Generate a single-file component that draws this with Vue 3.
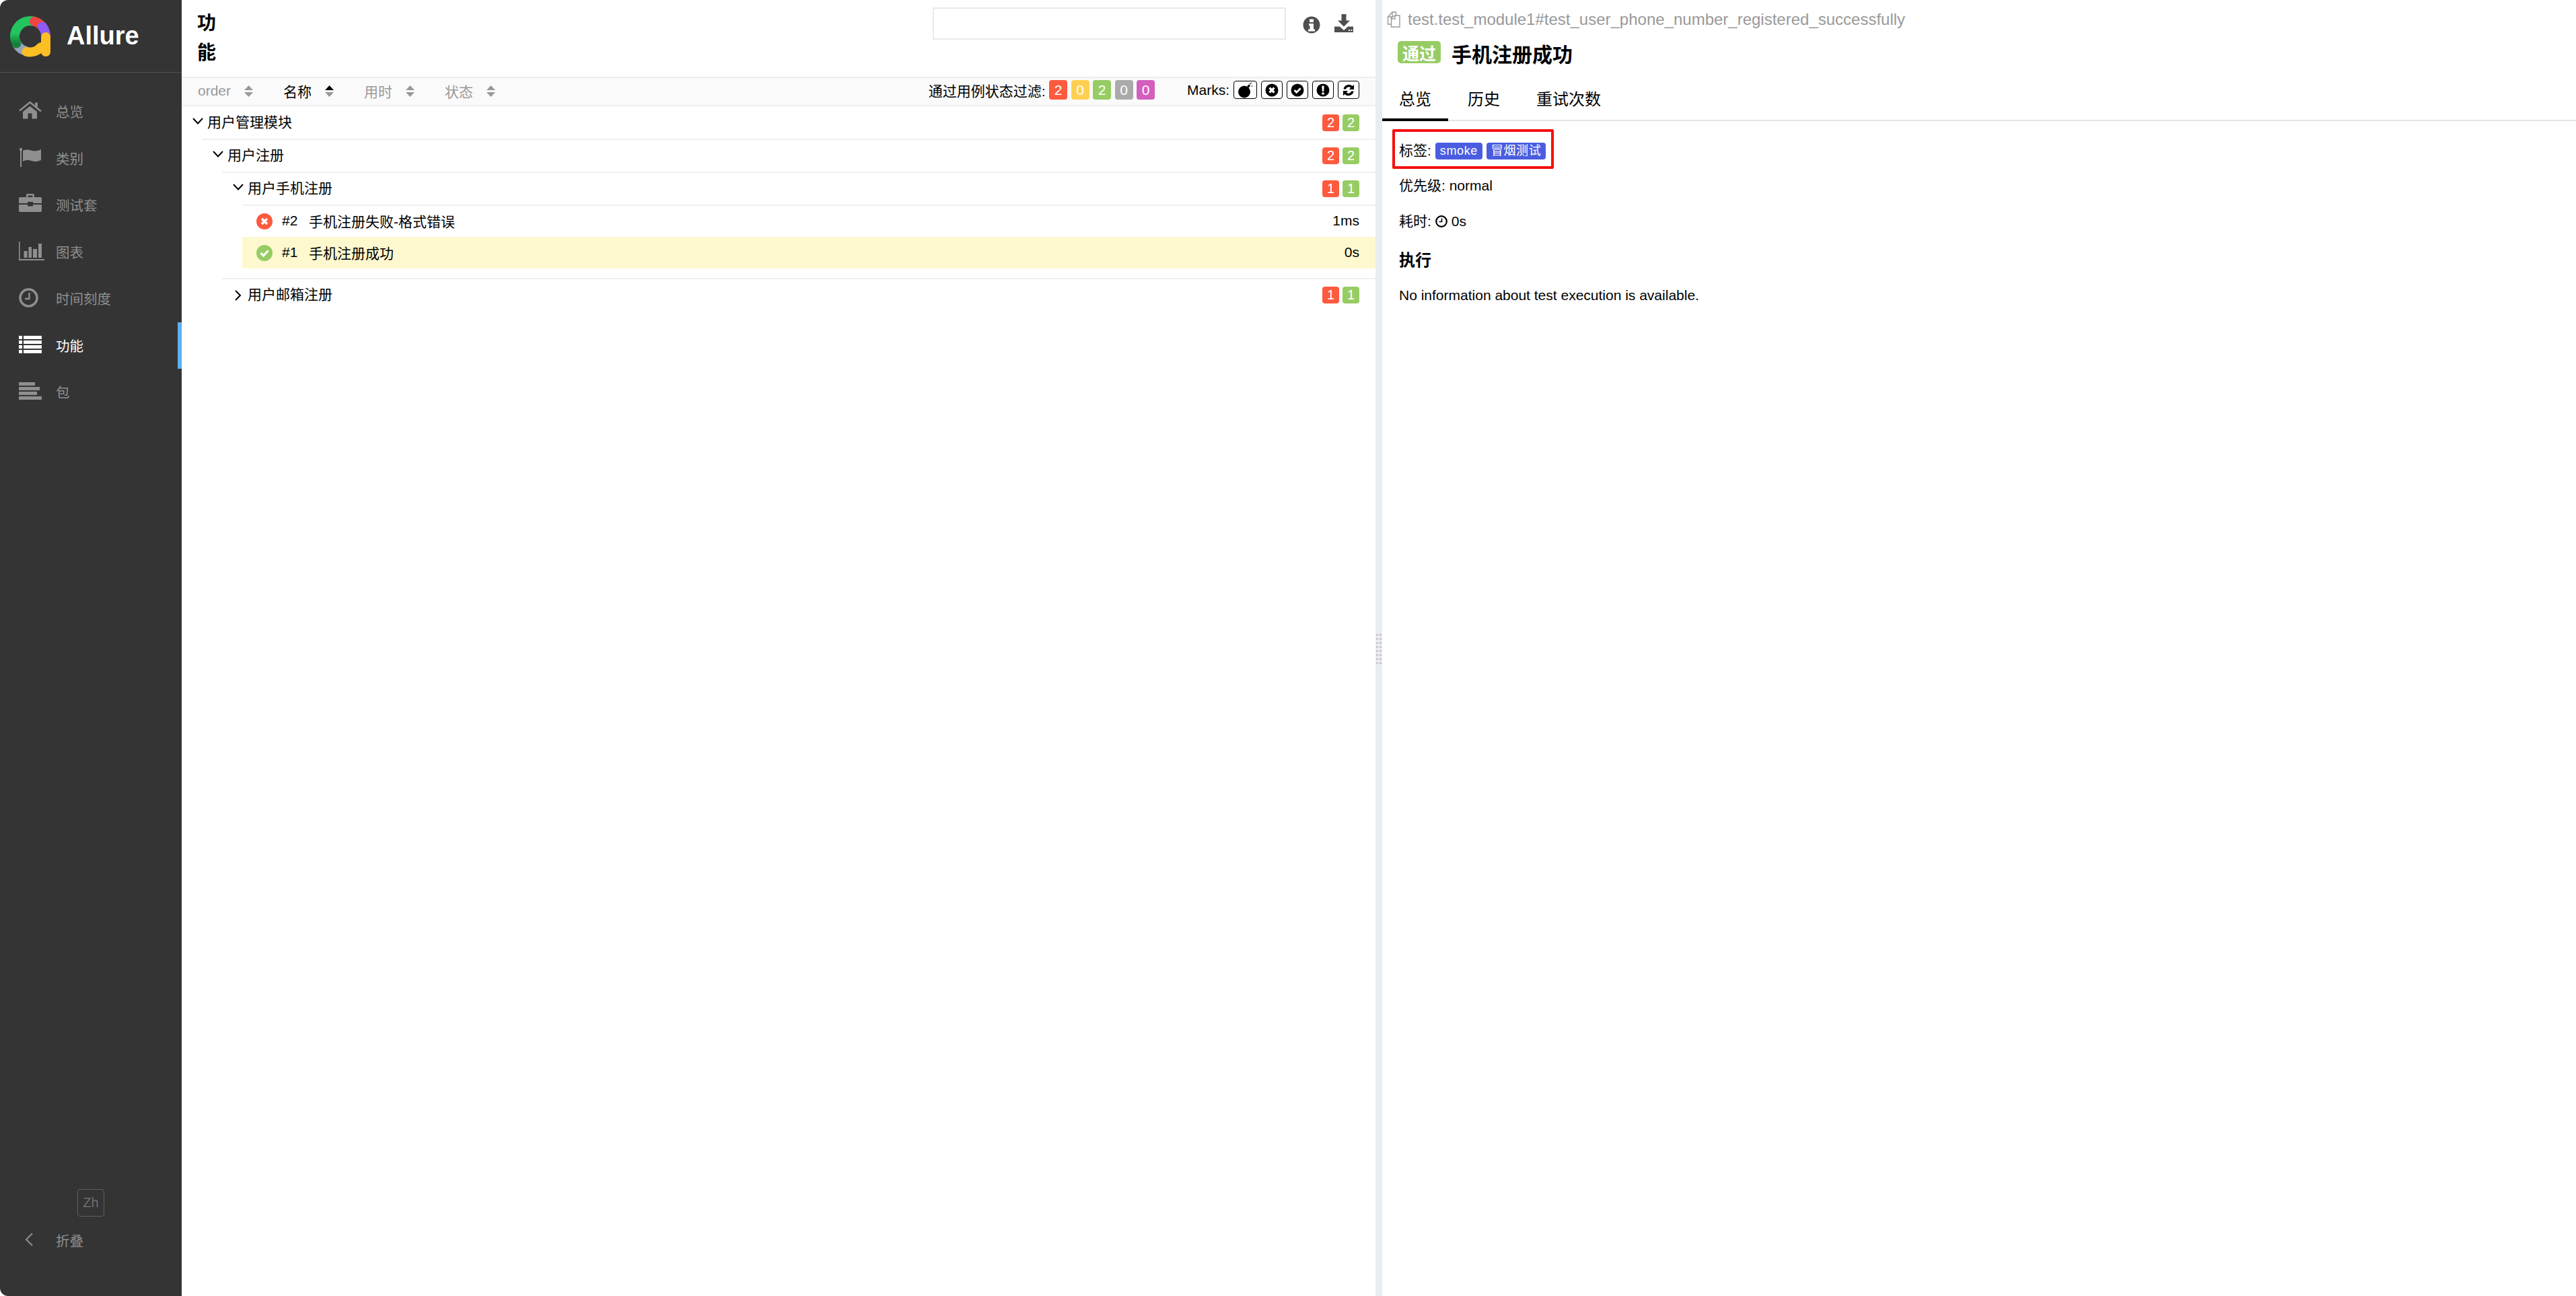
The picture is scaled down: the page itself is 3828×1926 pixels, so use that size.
<script setup>
const menu = [
  { label: '总览', icon: 'home' },
  { label: '类别', icon: 'flag' },
  { label: '测试套', icon: 'case' },
  { label: '图表', icon: 'chart' },
  { label: '时间刻度', icon: 'clock' },
  { label: '功能', icon: 'list', active: true },
  { label: '包', icon: 'pack' },
]
const sorts = [
  { label: 'order' },
  { label: '名称', active: true },
  { label: '用时' },
  { label: '状态' },
]
const filters = [
  { n: 2, c: 'failed' },
  { n: 0, c: 'broken' },
  { n: 2, c: 'passed' },
  { n: 0, c: 'skipped' },
  { n: 0, c: 'unknown' },
]
const dots = Array.from({ length: 16 }, (_, i) => i)
</script>

<template>
  <div class="app">
    <aside class="side">
      <div class="brand">
        <svg class="logo" viewBox="0 0 60 60" fill="none" stroke-width="14" stroke-linecap="round">
          <defs>
            <linearGradient id="g" x1="0" y1="0" x2="0" y2="1">
              <stop offset="0.55" stop-color="#22c55e" />
              <stop offset="1" stop-color="#15803d" />
            </linearGradient>
          </defs>
          <path d="M10 41.5 A23 23 0 0 0 25 52.5" stroke="#94a3b8" />
          <path d="M9.500 40.500 A23 23 0 0 1 35 7.600" stroke="url(#g)" />
          <path d="M36 7.800 A23 23 0 0 1 49 17" stroke="#ef4444" />
          <path d="M48 15.500 A23 23 0 0 1 53 30" stroke="#8b5cf6" />
          <path d="M53 31 V53" stroke="#fbbf24" />
          <path d="M24.500 53 A23 23 0 0 0 46 46" stroke="#fbbf24" />
        </svg>
        <span class="brand-name">Allure</span>
      </div>
      <nav class="menu">
        <a v-for="m in menu" :key="m.label" class="item" :class="{ on: m.active }">
          <span class="ico">
            <svg v-if="m.icon === 'home'" width="34" height="26" viewBox="0 0 34 26" fill="currentColor">
              <path d="M1 13.500 16.500 1 33 14.500" fill="none" stroke="currentColor" stroke-width="2.600" />
              <path d="M24 1.500h4v7l-4-3zM6 15 16.500 6.800 27 15v10.500h-7.500V17.500h-6v8H6z" />
            </svg>
            <svg v-else-if="m.icon === 'flag'" width="34" height="29" viewBox="0 0 34 29" fill="currentColor">
              <circle cx="3" cy="3" r="2.200" />
              <rect x="2" y="3" width="2" height="26" />
              <path d="M6 5c6-3 10-1 14 0 5 1 9 0 13-2v16c-5 2-9 3-14 1-4-1-8-2-13 1z" />
            </svg>
            <svg v-else-if="m.icon === 'case'" class="lift" width="34" height="28" viewBox="0 0 34 28" fill="currentColor">
              <path d="M11 6V3a2 2 0 0 1 2-2h8a2 2 0 0 1 2 2v3h-2.500V3.500h-7V6z" />
              <path d="M2 6h30a2 2 0 0 1 2 2v7H21v-2h-8v2H0V8a2 2 0 0 1 2-2z" />
              <path d="M0 17h13v2.500h8V17h13v9a2 2 0 0 1-2 2H2a2 2 0 0 1-2-2z" />
            </svg>
            <svg v-else-if="m.icon === 'chart'" width="38" height="28" viewBox="0 0 38 28" fill="currentColor">
              <path d="M0 0h1.600v26H38v2H0z" />
              <rect x="7.500" y="14" width="5" height="10" />
              <rect x="14.500" y="8" width="4.500" height="16" />
              <rect x="21" y="11" width="6" height="13" />
              <rect x="29" y="3" width="5" height="21" />
            </svg>
            <svg v-else-if="m.icon === 'clock'" width="29" height="29" viewBox="0 0 29 29" fill="none" stroke="currentColor">
              <circle cx="14.500" cy="14.500" r="12.500" stroke-width="3.600" />
              <path d="M15.500 7v9H9" stroke-width="2.400" />
            </svg>
            <svg v-else-if="m.icon === 'list'" width="34" height="26" viewBox="0 0 34 26" fill="currentColor">
              <path d="M0 0h5v5H0zM7 0h27v5H7zM0 7h5v5H0zM7 7h27v5H7zM0 14h5v5H0zM7 14h27v5H7zM0 21h5v5H0zM7 21h27v5H7z" />
            </svg>
            <svg v-else width="34" height="26" viewBox="0 0 34 26" fill="currentColor">
              <rect width="24" height="5" />
              <rect y="7" width="31" height="5" />
              <rect y="14" width="27" height="5" />
              <rect y="21" width="34" height="5" />
            </svg>
          </span>
          <span class="mtext">{{ m.label }}</span>
        </a>
      </nav>
      <div class="foot">
        <div class="lang">Zh</div>
        <div class="collapse">
          <span class="ico">
            <svg class="back" width="12" height="20" viewBox="0 0 12 20" fill="none" stroke="currentColor" stroke-width="2">
              <path d="M11 1 2 10l9 9" />
            </svg>
          </span>
          <span class="mtext">折叠</span>
        </div>
      </div>
    </aside>

    <main class="left">
      <header class="head">
        <h2 class="title">功能</h2>
        <div class="search"></div>
        <svg class="info" width="26" height="26" viewBox="0 0 26 26">
          <circle cx="13" cy="13" r="12.500" fill="#4f4f4f" />
          <path d="M10 4.500h6v4.500h-6zM9 11h7v8.500h2v3H8v-3h2.500v-5.500H9z" fill="#fff" />
        </svg>
        <svg class="dl" width="28" height="27" viewBox="0 0 28 27" fill="#4f4f4f">
          <path d="M10.500 0h7v9.500H23L14 18.500 5 9.500h5.500z" />
          <path d="M0 18.500h8l6 5.500 6-5.500h8V27H0zM21 23v2h2v-2zM24.500 23v2h2v-2z" fill-rule="evenodd" />
        </svg>
      </header>

      <div class="band">
        <div v-for="s in sorts" :key="s.label" class="sort" :class="{ on: s.active }">
          <span>{{ s.label }}</span>
          <svg class="arrows" width="13" height="17" viewBox="0 0 13 17">
            <path d="M6.500 0 13 7H0z" :fill="s.active ? '#000' : '#999'" />
            <path d="M6.500 17 13 10H0z" fill="#999" />
          </svg>
        </div>
        <div class="filter">
          <span class="flabel">通过用例状态过滤:</span>
          <span v-for="(f, i) in filters" :key="i" class="fbadge" :class="f.c">{{ f.n }}</span>
        </div>
        <div class="marks">
          <span class="mlabel">Marks:</span>
          <span class="mark wide">
            <svg width="24" height="24" viewBox="0 0 24 24">
              <circle cx="10" cy="14.500" r="9" fill="#000" />
              <path d="M14 6l3-2.500 2 2-2.500 3z" fill="#000" />
              <path d="M17.500 3.500 21 1M20 6h3M19 1l1 2" fill="none" stroke="#555" stroke-width="1.200" />
            </svg>
          </span>
          <span class="mark">
            <svg width="20" height="20" viewBox="0 0 20 20">
              <circle cx="10" cy="10" r="9.500" fill="#000" />
              <path d="M6.500 6.500l7 7M13.500 6.500l-7 7" stroke="#fff" stroke-width="3.200" />
            </svg>
          </span>
          <span class="mark">
            <svg width="20" height="20" viewBox="0 0 20 20">
              <circle cx="10" cy="10" r="9.500" fill="#000" />
              <path d="M5.500 10l3.200 3.200 6-6" fill="none" stroke="#fff" stroke-width="2.800" />
            </svg>
          </span>
          <span class="mark">
            <svg width="20" height="20" viewBox="0 0 20 20">
              <circle cx="10" cy="10" r="9.500" fill="#000" />
              <path d="M8.300 3.500h3.400l-.5 8.500H8.800zM8.300 13.500h3.400v3H8.300z" fill="#fff" />
            </svg>
          </span>
          <span class="mark">
            <svg width="20" height="20" viewBox="0 0 20 20" fill="#000">
              <path d="M2.500 8.500A7.800 7.800 0 0 1 15.700 4L18 1.700V9h-7.300l2.600-2.600A4.500 4.500 0 0 0 6 8.500z" />
              <path d="M17.500 11.500A7.800 7.800 0 0 1 4.300 16L2 18.300V11h7.300l-2.600 2.600A4.500 4.500 0 0 0 14 11.500z" />
            </svg>
          </span>
        </div>
      </div>

      <div class="tree">
        <div class="row first">
          <svg class="chev" width="16" height="10" viewBox="0 0 16 10" fill="none" stroke="#000" stroke-width="2"><path d="M1 1l7 7.500L15 1" /></svg>
          <span class="name">用户管理模块</span>
          <span class="counts"><b class="cb failed">2</b><b class="cb passed">2</b></span>
        </div>
        <div class="kids">
          <div class="row">
            <svg class="chev" width="16" height="10" viewBox="0 0 16 10" fill="none" stroke="#000" stroke-width="2"><path d="M1 1l7 7.500L15 1" /></svg>
            <span class="name">用户注册</span>
            <span class="counts"><b class="cb failed">2</b><b class="cb passed">2</b></span>
          </div>
          <div class="kids">
            <div class="row">
              <svg class="chev" width="16" height="10" viewBox="0 0 16 10" fill="none" stroke="#000" stroke-width="2"><path d="M1 1l7 7.500L15 1" /></svg>
              <span class="name">用户手机注册</span>
              <span class="counts"><b class="cb failed">1</b><b class="cb passed">1</b></span>
            </div>
            <div class="kids leafs">
              <div class="leaf bordered">
                <svg class="st" width="24" height="24" viewBox="0 0 24 24">
                  <circle cx="12" cy="12" r="12" fill="#fd5a3e" />
                  <path d="M8 8l8 8M16 8l-8 8" stroke="#fff" stroke-width="3.600" />
                </svg>
                <span class="num">#2</span>
                <span class="name">手机注册失败-格式错误</span>
                <span class="dur">1ms</span>
              </div>
              <div class="leaf sel">
                <svg class="st" width="24" height="24" viewBox="0 0 24 24">
                  <circle cx="12" cy="12" r="12" fill="#97cc64" />
                  <path d="M6.500 12l4 4 7-7.500" fill="none" stroke="#fff" stroke-width="3.200" />
                </svg>
                <span class="num">#1</span>
                <span class="name">手机注册成功</span>
                <span class="dur">0s</span>
              </div>
            </div>
            <div class="row">
              <svg class="chev closed" width="10" height="16" viewBox="0 0 10 16" fill="none" stroke="#000" stroke-width="2"><path d="M1 1l7 7-7 7" /></svg>
              <span class="name">用户邮箱注册</span>
              <span class="counts"><b class="cb failed">1</b><b class="cb passed">1</b></span>
            </div>
          </div>
        </div>
      </div>
    </main>

    <div class="split">
      <div class="grip"><i v-for="d in dots" :key="d"></i></div>
    </div>

    <section class="right">
      <div class="path">
        <svg width="25" height="24" viewBox="0 0 25 24" fill="none" stroke="#999" stroke-width="1.400">
          <path d="M6 19H1.500V8L8 1h5.500v5" />
          <path d="M8 1v7H1.500" />
          <path d="M6.500 9.500 12 6h7v17H6.500z" />
          <path d="M12 6v5H6.500" />
        </svg>
        <span>test.test_module1#test_user_phone_number_registered_successfully</span>
      </div>
      <div class="heading">
        <span class="status">通过</span>
        <h2 class="tname">手机注册成功</h2>
      </div>
      <div class="tabs">
        <a class="tab on">总览</a>
        <a class="tab">历史</a>
        <a class="tab">重试次数</a>
      </div>
      <div class="tagbox">
        <span>标签:</span>
        <span class="tag">smoke</span>
        <span class="tag">冒烟测试</span>
      </div>
      <p class="prio">优先级: normal</p>
      <p class="time">
        <span>耗时:</span>
        <svg width="18" height="18" viewBox="0 0 18 18" fill="none" stroke="#000">
          <circle cx="9" cy="9" r="7.800" stroke-width="2.200" />
          <path d="M9.500 4.500v5H5.500" stroke-width="1.600" />
        </svg>
        <span>0s</span>
      </p>
      <h3 class="exec">执行</h3>
      <p class="none">No information about test execution is available.</p>
    </section>
  </div>
</template>

<style>
html, body { margin: 0; background: #fff; overflow: hidden; }
</style>

<style scoped>
.app {
  display: flex;
  width: 3828px;
  height: 1926px;
  font-family: "Liberation Sans", "Noto Sans CJK SC", sans-serif;
  font-size: 21px;
  color: #000;
  background: #fff;
}
.side {
  flex: 0 0 270px;
  display: flex;
  flex-direction: column;
  background: #343434;
  color: #999;
  border-radius: 12px 0 0 12px;
  font-size: 20.500px;
}
.brand {
  height: 107px;
  border-bottom: 1px solid #525252;
  display: flex;
  align-items: center;
  padding-left: 15px;
}
.logo { width: 60px; height: 60px; overflow: visible; }
.brand-name {
  margin-left: 24px;
  font-size: 38px;
  font-weight: 700;
  color: #fff;
}
.menu { padding-top: 23px; display: flex; flex-direction: column; }
.item {
  height: 69.500px;
  display: flex;
  align-items: center;
  padding-left: 28px;
  box-sizing: border-box;
  color: #8f8f8f;
}
.item.on { color: #fff; border-right: 6px solid #5fb0f0; }
.ico { width: 55px; display: flex; align-items: center; margin-bottom: 3px; }
.mtext { margin-bottom: 1px; }
.lift { margin-bottom: 4px; }
.foot {
  margin-top: auto;
  padding-bottom: 63px;
  display: flex;
  flex-direction: column;
}
.lang {
  align-self: center;
  width: 40px;
  height: 41px;
  box-sizing: border-box;
  border: 1px solid #5f5f5f;
  border-radius: 4px;
  color: #6e6e6e;
  display: flex;
  align-items: center;
  justify-content: center;
  font-size: 20px;
  margin-bottom: 15px;
}
.collapse {
  height: 40px;
  display: flex;
  align-items: center;
  padding-left: 28px;
  color: #8f8f8f;
}
.back { margin-left: 9px; }

.left { flex: 0 0 1774px; display: flex; flex-direction: column; min-width: 0; }
.head {
  height: 114px;
  display: flex;
  align-items: flex-start;
  padding: 0 33px 0 23px;
  box-sizing: border-box;
}
.title {
  margin: 13px 0 0;
  width: 30px;
  font-size: 28px;
  line-height: 44px;
  font-weight: 700;
}
.search {
  margin: 11px 0 0 auto;
  width: 525px;
  height: 48px;
  box-sizing: border-box;
  border: 2px solid #e8e9ea;
}
.info { margin: 24px 0 0 25px; }
.dl { margin: 21px 0 0 21px; }

.band {
  height: 44px;
  box-sizing: border-box;
  border-top: 2px solid #eeeeee;
  border-bottom: 2px solid #eeeeee;
  background: #fafafa;
  display: flex;
  align-items: center;
  padding: 0 24px 5px;
  font-size: 21px;
}
.sort {
  display: flex;
  align-items: center;
  color: #999;
  margin-top: 3px;
  margin-right: 45px;
}
.sort.on { color: #000; }
.arrows { margin-left: 20px; }
.filter { margin-left: auto; display: flex; align-items: center; gap: 5.500px; }
.flabel { font-size: 21px; color: #000; }
.fbadge {
  width: 27px;
  height: 29px;
  border-radius: 4px;
  color: #fff;
  display: flex;
  align-items: center;
  justify-content: center;
  font-size: 21px;
}
.failed { background: #fd5a3e; }
.broken { background: #ffd050; }
.passed { background: #97cc64; }
.skipped { background: #aaaaaa; }
.unknown { background: #d35ebe; }
.marks { margin-left: 48px; display: flex; align-items: center; gap: 6px; }
.mlabel { font-size: 21px; color: #000; }
.mark {
  width: 32px;
  height: 27px;
  box-sizing: border-box;
  border: 1.500px solid #000;
  border-radius: 4px;
  background: #fff;
  display: flex;
  align-items: center;
  justify-content: center;
}
.mark.wide { width: 35px; }

.tree { display: flex; flex-direction: column; }
.kids { margin-left: 30px; }
.row {
  height: 49px;
  box-sizing: border-box;
  border-top: 2px solid #eef0f2;
  display: flex;
  align-items: center;
  padding: 0 24px 0 16px;
}
.row.first { height: 48px; border-top: 0; }
.chev { flex: 0 0 16px; margin-bottom: 5px; }
.chev.closed { flex: 0 0 10px; margin: 0 3px 0 3px; }
.name { margin-left: 6px; margin-bottom: 5px; }
.counts { margin-left: auto; display: flex; gap: 5px; }
.cb {
  width: 25px;
  height: 25px;
  border-radius: 4px;
  color: #fff;
  font-weight: 400;
  font-size: 20px;
  display: flex;
  align-items: center;
  justify-content: center;
}
.leafs { margin-bottom: 14px; }
.leaf {
  height: 47px;
  display: flex;
  align-items: center;
  padding: 0 24px 0 21px;
}
.leaf.bordered { height: 48px; box-sizing: border-box; border-top: 2px solid #eef0f2; }
.leaf.sel { background: #fef8ce; }
.num { margin-left: 14px; width: 34px; margin-bottom: 2px; }
.leaf .name { margin-left: 6px; margin-bottom: 2px; }
.dur { margin-left: auto; margin-bottom: 2px; }

.split {
  flex: 0 0 10px;
  background: #e9edf1;
  display: flex;
  align-items: center;
  justify-content: center;
}
.grip {
  display: grid;
  grid-template-columns: 3px 3px;
  grid-auto-rows: 3px;
  gap: 3px 2px;
  margin-top: 3px;
}
.grip i { background: #c9c9c9; }

.right { flex: 1; min-width: 0; }
.path {
  margin: 12px 0 0 7px;
  height: 34px;
  display: flex;
  align-items: center;
  gap: 6px;
  font-size: 24px;
  color: #999;
}
.heading {
  display: flex;
  align-items: flex-start;
  padding: 15px 0 0 23px;
}
.status {
  width: 64px;
  height: 33px;
  border-radius: 5px;
  background: #97cc64;
  color: #fff;
  font-size: 25px;
  font-weight: 700;
  display: flex;
  align-items: center;
  justify-content: center;
}
.tname {
  margin: 0 0 0 16px;
  font-size: 30px;
  line-height: 42px;
  font-weight: 700;
}
.tabs {
  margin-top: 17px;
  height: 60px;
  box-sizing: border-box;
  border-bottom: 2px solid #e4e4e4;
  display: flex;
  gap: 4px;
}
.tab {
  height: 60px;
  box-sizing: border-box;
  padding: 0 25px;
  font-size: 24px;
  line-height: 56px;
}
.tab.on { border-bottom: 4px solid #000; }
.tagbox {
  display: inline-flex;
  align-items: center;
  margin: 12px 0 0 15px;
  padding: 0 8px 0 6px;
  height: 59px;
  box-sizing: border-box;
  border: 4px solid #f50f0f;
  border-radius: 2px;
  gap: 6px;
}
.tag {
  height: 25px;
  margin-top: 5px;
  padding: 0 7px;
  border-radius: 4px;
  background: #4a5de0;
  color: #fff;
  font-size: 18px;
  line-height: 25px;
  letter-spacing: 0.600px;
}
.prio, .time, .none {
  margin-left: 25px;
  margin-right: 0;
  margin-bottom: 0;
  line-height: 30px;
}
.prio { margin-top: 10px; }
.time { margin-top: 23px; display: flex; align-items: center; gap: 6px; }
.exec {
  margin: 26px 0 0 25px;
  font-size: 24px;
  line-height: 34px;
  font-weight: 700;
}
.none { margin-top: 20px; }
</style>
